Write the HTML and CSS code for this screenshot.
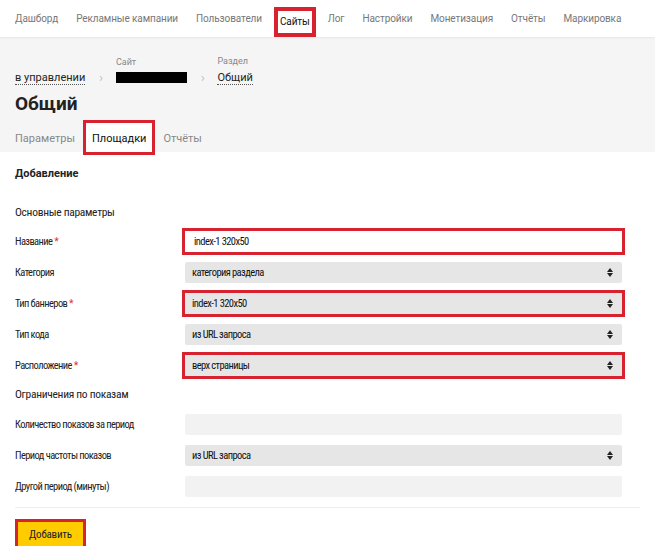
FILE: index.html
```html
<!DOCTYPE html>
<html lang="ru">
<head>
    <meta charset="UTF-8">
    <title>Общий — Площадки</title>
    <link rel="stylesheet" href="styles.css">
</head>
<body>
    <nav class="topnav">
        <a href="#">Дашборд</a>
        <a href="#">Рекламные кампании</a>
        <a href="#">Пользователи</a>
        <a href="#" class="active mark">Сайты</a>
        <a href="#">Лог</a>
        <a href="#">Настройки</a>
        <a href="#">Монетизация</a>
        <a href="#">Отчёты</a>
        <a href="#">Маркировка</a>
    </nav>

    <div class="head">
        <div class="crumbs">
            <div class="crumb">
                <span class="crumb-label">&nbsp;</span>
                <span class="crumb-value">в управлении</span>
            </div>
            <span class="sep">›</span>
            <div class="crumb">
                <span class="crumb-label">Сайт</span>
                <span class="hidden-site"></span>
            </div>
            <span class="sep">›</span>
            <div class="crumb">
                <span class="crumb-label">Раздел</span>
                <span class="crumb-value">Общий</span>
            </div>
        </div>
        <h1>Общий</h1>
        <div class="tabs">
            <a href="#">Параметры</a>
            <a href="#" class="active mark">Площадки</a>
            <a href="#">Отчёты</a>
        </div>
    </div>

    <div class="content">
        <h2>Добавление</h2>

        <h3>Основные параметры</h3>
        <div class="row">
            <label>Название <i>*</i></label>
            <input class="field white mark" type="text" value="index-1 320x50">
        </div>
        <div class="row">
            <label>Категория</label>
            <div class="field select">категория раздела</div>
        </div>
        <div class="row">
            <label>Тип баннеров <i>*</i></label>
            <div class="field select mark">index-1 320x50</div>
        </div>
        <div class="row">
            <label>Тип кода</label>
            <div class="field select">из URL запроса</div>
        </div>
        <div class="row">
            <label>Расположение <i>*</i></label>
            <div class="field select mark">верх страницы</div>
        </div>

        <h3 class="sub">Ограничения по показам</h3>
        <div class="row">
            <label>Количество показов за период</label>
            <div class="field empty"></div>
        </div>
        <div class="row">
            <label>Период частоты показов</label>
            <div class="field select">из URL запроса</div>
        </div>
        <div class="row">
            <label>Другой период (минуты)</label>
            <div class="field empty"></div>
        </div>

        <div class="actions">
            <button class="btn-add mark">Добавить</button>
        </div>
    </div>
</body>
</html>
```

FILE: styles.css
```css
/* General */
body {
    margin: 0;
    font-family: Roboto, "Noto Sans", sans-serif;
    font-size: 11px;
    color: #222;
    background: #fff;
}

a {
    color: inherit;
    text-decoration: none;
}

/* Red highlight frames */
.mark {
    outline: 3px solid #d7232f;
    outline-offset: 0;
    border-radius: 0 !important;
}

/* Top navigation */
.topnav {
    display: flex;
    align-items: center;
    gap: 18px;
    height: 37px;
    padding: 0 15px;
    font-size: 10px;
    letter-spacing: -0.1px;
    color: #777;
    white-space: nowrap;
    box-shadow: 0 1px 2px rgba(0, 0, 0, 0.06);
    position: relative;
}

.topnav a {
    flex: none;
}

.topnav .active {
    color: #111;
    background: #fff;
    height: 16px;
    line-height: 16px;
    padding: 7px 6px;
    margin: 7px -6px 0;
    outline-width: 4px;
    outline-offset: -4px;
}

/* Grey header */
.head {
    background: #f5f5f5;
    padding: 19px 15px 0;
}

.crumbs {
    display: flex;
    align-items: flex-end;
}

.crumb {
    display: flex;
    flex-direction: column;
}

.crumb-label {
    font-size: 9px;
    color: #888;
    margin-bottom: 5px;
}

.crumb-value {
    border-bottom: 1px dotted #555;
    line-height: 13px;
    color: #222;
}

.hidden-site {
    display: block;
    width: 71px;
    height: 11px;
    background: #000;
    margin-bottom: 2px;
}

.sep {
    color: #bbb;
    margin: 0 13px 0 14px;
    font-size: 12px;
    line-height: 14px;
}

h1 {
    font-size: 19px;
    font-weight: 700;
    margin: 7px 0 0;
    line-height: 24px;
}

.tabs {
    display: flex;
    gap: 8px;
    margin-top: 4px;
    color: #888;
    align-items: flex-end;
}

.tabs a {
    padding: 8px 0 7px;
}

.tabs .active {
    color: #111;
    background: #fff;
    padding: 12px 9px 10px;
    margin-bottom: -3px;
    outline-offset: -3px;
    position: relative;
}

/* Form */
.content {
    padding: 14px 15px 0;
    font-family: "Liberation Sans Narrow", "Roboto Condensed", Roboto, sans-serif;
    font-size: 10.5px;
    letter-spacing: -0.6px;
}

h2 {
    font-family: Roboto, sans-serif;
    font-size: 11px;
    letter-spacing: 0;
    font-weight: 700;
    margin: 0 0 22px;
    line-height: 16px;
}

h3 {
    font-size: 11.5px;
    letter-spacing: -0.3px;
    font-weight: 400;
    margin: 0 0 11px;
    line-height: 16px;
}

h3.sub {
    margin: 10px 0 12px;
}

.row {
    display: flex;
    align-items: center;
    margin-bottom: 10px;
}

.row label {
    width: 170px;
    flex: none;
}

.row label i {
    color: #e0303a;
    font-style: normal;
}

.field {
    box-sizing: border-box;
    width: 437px;
    height: 21px;
    border: none;
    border-radius: 2px;
    font: inherit;
    letter-spacing: inherit;
    line-height: 21px;
    padding: 0 7px;
    color: #111;
}

.field.white {
    background: #fff;
    padding-left: 9px;
}

.field.select {
    background: #e6e6e6;
    position: relative;
}

.field.select::after,
.field.select::before {
    content: "";
    position: absolute;
    right: 9px;
    width: 0;
    height: 0;
    border-left: 3px solid transparent;
    border-right: 3px solid transparent;
}

.field.select::after {
    top: 6px;
    border-bottom: 4px solid #222;
}

.field.select::before {
    top: 11px;
    border-top: 4px solid #222;
}

.field.empty {
    background: #f2f2f2;
}

.actions {
    border-top: 1px solid #eee;
    margin-top: 10px;
    padding-top: 14px;
}

.btn-add {
    font: inherit;
    font-size: 11px;
    letter-spacing: -0.2px;
    background: #ffcc00;
    color: #222;
    border: none;
    height: 24px;
    padding: 0 11px;
    margin-left: 3px;
}
```
